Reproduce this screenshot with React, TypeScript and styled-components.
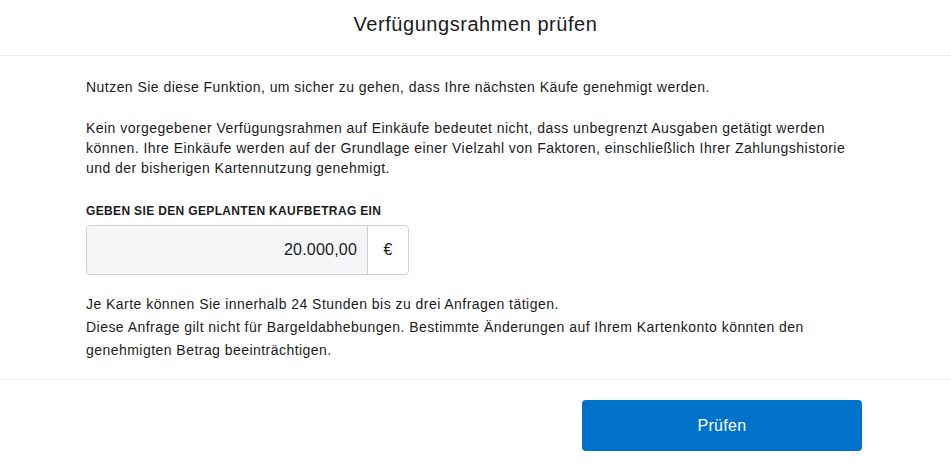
import styled, { createGlobalStyle } from "styled-components";

const GlobalStyle = createGlobalStyle`
  body {
    margin: 0;
    background: #ffffff;
    font-family: "Liberation Sans", Arial, Helvetica, sans-serif;
    color: #1b1b1b;
  }
`;

const Page = styled.div`
  width: 951px;
  height: 469px;
  display: flex;
  flex-direction: column;
  background: #fff;
`;

const Header = styled.div`
  height: 56px;
  box-sizing: border-box;
  padding-bottom: 6px;
  display: flex;
  justify-content: center;
  align-items: center;
  border-bottom: 1px solid #ececec;
  font-size: 20px;
  letter-spacing: 0.55px;
  color: #1b1b1b;
`;

const Body = styled.div`
  padding: 21px 89px 17px 86px;
  border-bottom: 1px solid #ececec;
`;

const Text = styled.p<{ $lh?: number }>`
  margin: 0 0 21px;
  font-size: 14px;
  letter-spacing: 0.46px;
  line-height: ${(p) => p.$lh ?? 20}px;
  &:last-child {
    margin-bottom: 0;
  }
`;

const Label = styled.div`
  font-size: 12px;
  font-weight: bold;
  letter-spacing: 0.35px;
  line-height: 16px;
  margin-top: 25px;
  margin-bottom: 6px;
`;

const Field = styled.div`
  display: flex;
  width: 323px;
  height: 50px;
  box-sizing: border-box;
  border: 1px solid #cfd0cf;
  border-radius: 4px;
  overflow: hidden;
  margin-bottom: 18px;
`;

const Amount = styled.div`
  flex: 1;
  display: flex;
  align-items: center;
  justify-content: flex-end;
  padding-right: 10px;
  background: #f5f6f8;
  font-size: 16px;
  letter-spacing: 0.2px;
  border-right: 1px solid #cfd0cf;
`;

const Currency = styled.div`
  width: 40px;
  display: flex;
  align-items: center;
  justify-content: center;
  font-size: 16px;
`;

const Footer = styled.div`
  display: flex;
  justify-content: flex-end;
  padding: 20px 89px 0 0;
`;

const Button = styled.button`
  width: 280px;
  height: 51px;
  border: none;
  border-radius: 4px;
  background: #0072c9;
  color: #fff;
  font-family: inherit;
  font-size: 16px;
  letter-spacing: 0.3px;
`;

export default function App() {
  return (
    <Page>
      <GlobalStyle />
      <Header>Verfügungsrahmen prüfen</Header>
      <Body>
        <Text>
          Nutzen Sie diese Funktion, um sicher zu gehen, dass Ihre nächsten Käufe genehmigt werden.
        </Text>
        <Text>
          Kein vorgegebener Verfügungsrahmen auf Einkäufe bedeutet nicht, dass unbegrenzt Ausgaben getätigt werden
          können. Ihre Einkäufe werden auf der Grundlage einer Vielzahl von Faktoren, einschließlich Ihrer Zahlungshistorie
          und der bisherigen Kartennutzung genehmigt.
        </Text>
        <Label>GEBEN SIE DEN GEPLANTEN KAUFBETRAG EIN</Label>
        <Field>
          <Amount>20.000,00</Amount>
          <Currency>€</Currency>
        </Field>
        <Text $lh={23}>
          Je Karte können Sie innerhalb 24 Stunden bis zu drei Anfragen tätigen.
          <br />
          Diese Anfrage gilt nicht für Bargeldabhebungen. Bestimmte Änderungen auf Ihrem Kartenkonto könnten den
          genehmigten Betrag beeinträchtigen.
        </Text>
      </Body>
      <Footer>
        <Button>Prüfen</Button>
      </Footer>
    </Page>
  );
}
